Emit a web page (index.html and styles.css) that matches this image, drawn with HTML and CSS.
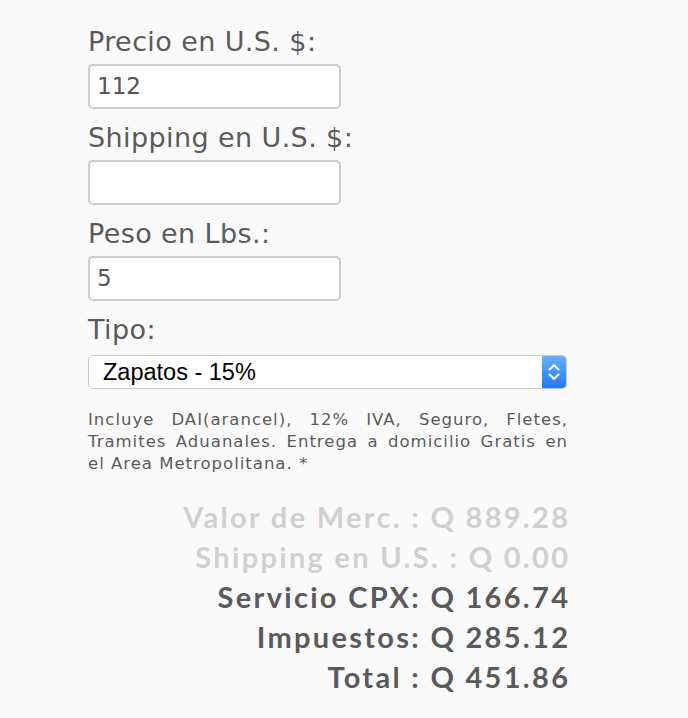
FILE: index.html
```html
<!DOCTYPE html>
<html lang="es">
<head>
<meta charset="utf-8">
<title>Calculadora</title>
<link rel="stylesheet" href="styles.css">
</head>
<body>
<div class="calc">
  <label class="lbl">Precio en U.S. $:</label>
  <div class="field">112</div>
  <label class="lbl">Shipping en U.S. $:</label>
  <div class="field"></div>
  <label class="lbl">Peso en Lbs.:</label>
  <div class="field">5</div>
  <label class="lbl">Tipo:</label>
  <div class="select">
    <span class="sel-text">Zapatos - 15%</span>
    <span class="stepper">
      <svg width="14" height="24" viewBox="0 0 14 24"><path d="M2.5 9.5 L7 5 L11.5 9.5" fill="none" stroke="#fff" stroke-width="2" stroke-linecap="round" stroke-linejoin="round"/><path d="M2.5 14.5 L7 19 L11.5 14.5" fill="none" stroke="#fff" stroke-width="2" stroke-linecap="round" stroke-linejoin="round"/></svg>
    </span>
  </div>
  <p class="desc">Incluye DAI(arancel), 12% IVA, Seguro, Fletes, Tramites Aduanales. Entrega a domicilio Gratis en el Area Metropolitana. *</p>
  <div class="results">
    <div class="res light">Valor de Merc. : Q 889.28</div>
    <div class="res light">Shipping en U.S. : Q 0.00</div>
    <div class="res">Servicio CPX: Q 166.74</div>
    <div class="res">Impuestos: Q 285.12</div>
    <div class="res">Total : Q 451.86</div>
  </div>
</div>
</body>
</html>
```
FILE: styles.css
```css
html, body {
  margin: 0;
  padding: 0;
  background: #fafafa;
}
.calc {
  width: 480px;
  padding: 27px 0 0 88px;
  display: flex;
  flex-direction: column;
  align-items: flex-start;
  color: #5a5a5a;
}
.lbl {
  display: block;
  font-family: "DejaVu Sans", sans-serif;
  font-size: 27px;
  line-height: 30px;
  height: 30px;
  margin-bottom: 7px;
  letter-spacing: 0.4px;
  color: #5a5a5a;
}
.field {
  box-sizing: border-box;
  width: 253px;
  height: 45px;
  border: 2px solid #cccccc;
  border-radius: 5px;
  background: #fff;
  margin-bottom: 14px;
  padding: 0 7px;
  font-family: "DejaVu Sans", sans-serif;
  font-size: 23px;
  line-height: 41px;
  color: #555;
}
.select {
  box-sizing: border-box;
  width: 479px;
  height: 34px;
  margin-top: 3px;
  border: 1px solid #c8c8c8;
  border-radius: 5px;
  background: #fff;
  display: flex;
  align-items: center;
  justify-content: space-between;
  overflow: hidden;
}
.sel-text {
  font-family: "Liberation Sans", Arial, sans-serif;
  font-size: 23.5px;
  color: #000;
  padding-left: 14px;
}
.stepper {
  width: 24px;
  height: 100%;
  background: linear-gradient(#69aefc, #1d7af6);
  display: flex;
  align-items: center;
  justify-content: center;
}
.desc {
  margin: 20px 0 0 0;
  width: 480px;
  font-family: "DejaVu Sans", sans-serif;
  font-size: 16.5px;
  line-height: 22px;
  letter-spacing: 1px;
  text-align: justify;
  color: #5a5a5a;
}
.results {
  width: 480px;
  margin-top: 22px;
  display: flex;
  flex-direction: column;
  align-items: flex-end;
}
.res {
  font-family: "Lato", sans-serif;
  font-weight: 700;
  font-size: 29px;
  line-height: 40px;
  letter-spacing: 2.3px;
  margin-right: -2.3px;
  color: #5a5a5a;
}
.res.light {
  color: #d0d0d0;
}
```
